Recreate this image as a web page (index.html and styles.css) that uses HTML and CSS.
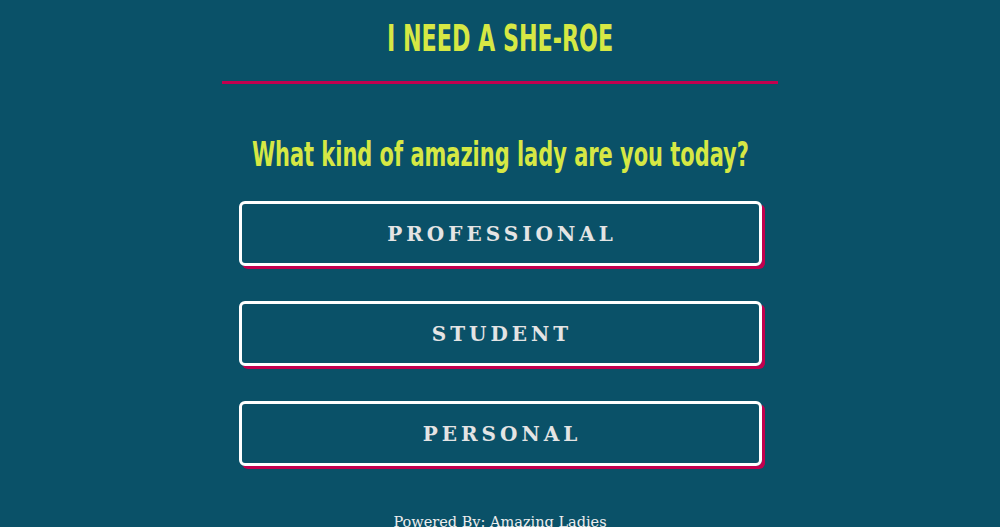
FILE: index.html
```html
<!DOCTYPE html>
<html>
<head>
<meta charset="utf-8">
<link rel="stylesheet" href="styles.css">
</head>
<body>
<div class="page">
  <header class="header">
    <h1 class="title"><span class="squeeze title-squeeze">I NEED A SHE-ROE</span></h1>
  </header>
  <main class="main">
    <h2 class="question"><span class="squeeze question-squeeze">What kind of amazing lady are you today?</span></h2>
    <div class="choices">
      <a class="choice" href="#">PROFESSIONAL</a>
      <a class="choice" href="#">STUDENT</a>
      <a class="choice" href="#">PERSONAL</a>
    </div>
  </main>
  <footer class="footer">Powered By: Amazing Ladies</footer>
</div>
</body>
</html>
```
FILE: styles.css
```css
html, body {
  margin: 0;
  padding: 0;
  background: #0a5168;
}
.page {
  display: flex;
  flex-direction: column;
  align-items: center;
}
.header {
  width: 556px;
  border-bottom: 3px solid #c2004e;
  text-align: center;
  height: 84px;
  box-sizing: border-box;
}
.title {
  margin: 0;
  padding-top: 19px;
  font-family: "DejaVu Sans Condensed", "DejaVu Sans", sans-serif;
  font-stretch: condensed;
  font-weight: bold;
  font-size: 38px;
  line-height: 38px;
  color: #d6e844;
}
.squeeze {
  display: inline-block;
  white-space: nowrap;
}
.title-squeeze {
  transform: scaleX(0.65);
}
.question-squeeze {
  transform: scaleX(0.705);
}
.main {
  display: flex;
  flex-direction: column;
  align-items: center;
}
.question {
  margin: 0;
  padding-top: 51px;
  font-family: "DejaVu Sans Condensed", "DejaVu Sans", sans-serif;
  font-stretch: condensed;
  font-weight: bold;
  font-size: 33px;
  line-height: 40px;
  color: #d6e844;
}
.choices {
  display: flex;
  flex-direction: column;
  gap: 35px;
  width: 523px;
  margin-top: 26px;
}
.choice {
  display: flex;
  align-items: center;
  justify-content: center;
  height: 65px;
  box-sizing: border-box;
  border: 3px solid #ffffff;
  border-radius: 6px;
  box-shadow: 3px 3px 0 #c2004e;
  text-decoration: none;
  font-family: "DejaVu Serif", serif;
  font-weight: bold;
  font-size: 20px;
  letter-spacing: 4px;
  color: #e4e4e4;
  padding-left: 4px;
}
.footer {
  margin-top: 46px;
  font-family: "DejaVu Serif", serif;
  font-size: 14.5px;
  line-height: 20px;
  color: #eeeeee;
}
```
